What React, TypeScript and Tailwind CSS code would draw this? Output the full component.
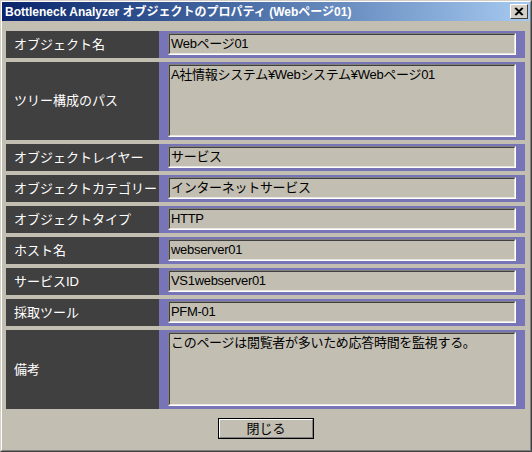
import React from 'react';

type Field = { label: string; value: string; tall?: 'path' | 'note' };

const fields: Field[] = [
  { label: 'オブジェクト名', value: 'Webページ01' },
  { label: 'ツリー構成のパス', value: 'A社情報システム¥Webシステム¥Webページ01', tall: 'path' },
  { label: 'オブジェクトレイヤー', value: 'サービス' },
  { label: 'オブジェクトカテゴリー', value: 'インターネットサービス' },
  { label: 'オブジェクトタイプ', value: 'HTTP' },
  { label: 'ホスト名', value: 'webserver01' },
  { label: 'サービスID', value: 'VS1webserver01' },
  { label: '採取ツール', value: 'PFM-01' },
  { label: '備考', value: 'このページは閲覧者が多いため応答時間を監視する。', tall: 'note' },
];

const font = { fontFamily: '"Liberation Sans", "Noto Sans CJK JP", sans-serif' };

function FieldRow({ f }: { f: Field }) {
  const h = f.tall === 'path' ? 'h-[78px]' : f.tall === 'note' ? 'h-[79px]' : 'h-[27px]';
  return (
    <div className={`flex ${h}`}>
      <div className="w-[153px] shrink-0 bg-[#404040] flex items-center pl-[8px] text-white text-[13px] whitespace-nowrap">
        {f.label}
      </div>
      <div className="flex-1 bg-[#7874b8] pl-[9px] pr-[9px] pt-[2px] pb-[3px] flex">
        <div className="flex-1 border-t border-l border-[#808080] border-b-white border-r-white border-b border-r flex">
          <div className="flex-1 border-t border-l border-[#404040] border-b-[#e8e6de] border-r-[#e8e6de] border-b border-r bg-[#c2beb2] px-[1px] pt-[1px] text-[13px] leading-[16px] tracking-[-0.3px] text-black whitespace-nowrap overflow-hidden">
            {f.value}
          </div>
        </div>
      </div>
    </div>
  );
}

export default function App() {
  return (
    <div className="w-[532px] h-[452px] border border-[#d4d0c8] border-r-[#404040] border-b-[#404040]" style={font}>
      <div className="h-full border border-white border-r-[#808080] border-b-[#808080] bg-[#c2beb2] flex flex-col">
        <div className="h-[19px] flex items-center justify-between bg-gradient-to-r from-[#0a246a] to-[#a6caf0] pl-[3px] pr-[2px]">
          <span className="text-white font-bold text-[12px] leading-none whitespace-nowrap">
            Bottleneck Analyzer オブジェクトのプロパティ (Webページ01)
          </span>
          <div className="w-[18px] h-[15px] bg-[#d4d0c8] border border-white border-r-[#404040] border-b-[#404040] flex items-center justify-center">
            <svg width="10" height="9" viewBox="0 0 10 9">
              <path d="M1 1 L8 8 M2 1 L9 8 M8 1 L1 8 M9 1 L2 8" stroke="#000" strokeWidth="1.3" />
            </svg>
          </div>
        </div>
        <div className="flex flex-col gap-[4px] pl-[4px] pr-[5px] pt-[10px]">
          {fields.map((f) => (
            <FieldRow key={f.label} f={f} />
          ))}
        </div>
        <div className="flex justify-center pt-[9px]">
          <button className="w-[96px] h-[21px] border border-black bg-[#c2beb2] flex">
            <span className="flex-1 border border-white border-r-[#808080] border-b-[#808080] flex items-center justify-center text-[13px] text-black">
              閉じる
            </span>
          </button>
        </div>
      </div>
    </div>
  );
}
